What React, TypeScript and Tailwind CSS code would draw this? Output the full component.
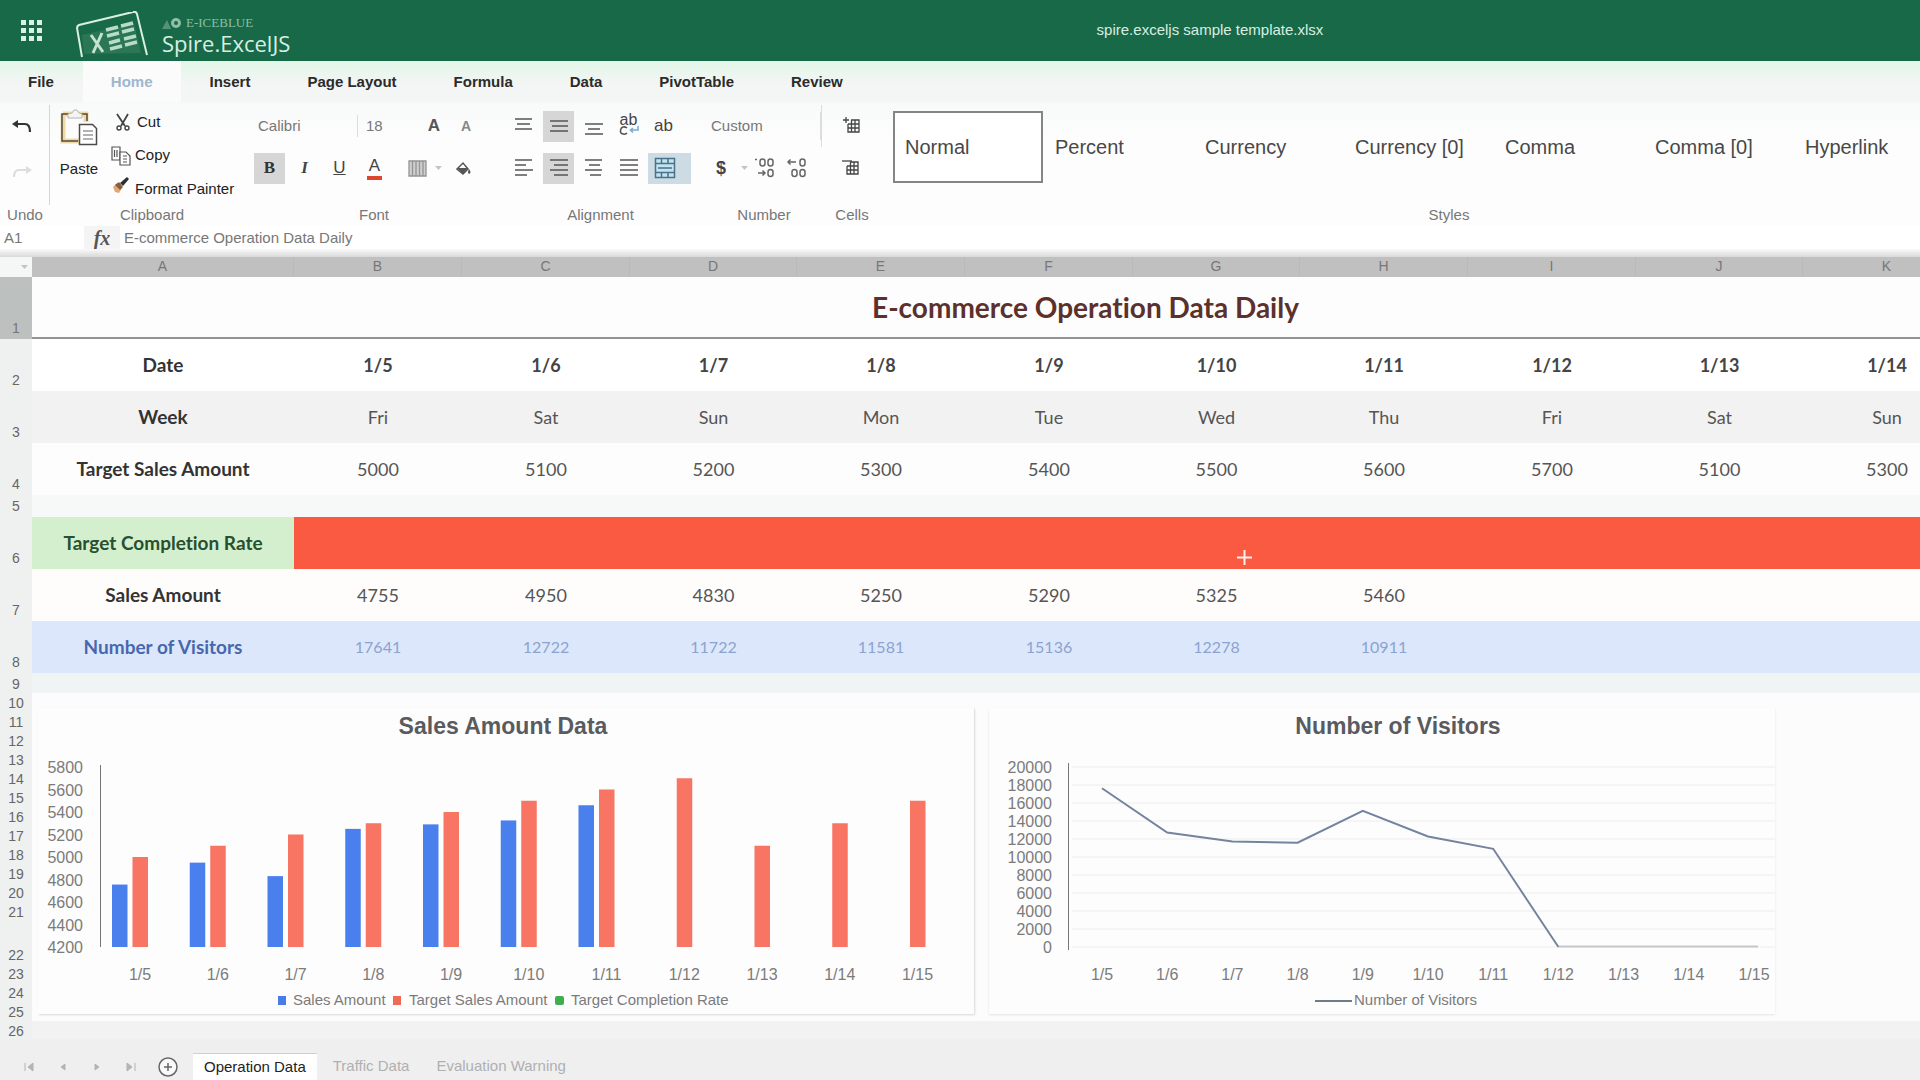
import React from "react";

const dates = ["1/5", "1/6", "1/7", "1/8", "1/9", "1/10", "1/11", "1/12", "1/13", "1/14", "1/15"];
const weeks = ["Fri", "Sat", "Sun", "Mon", "Tue", "Wed", "Thu", "Fri", "Sat", "Sun"];
const targets = [5000, 5100, 5200, 5300, 5400, 5500, 5600, 5700, 5100, 5300, 5500];
const sales = [4755, 4950, 4830, 5250, 5290, 5325, 5460];
const visitors = [17641, 12722, 11722, 11581, 15136, 12278, 10911];
const columns = ["A", "B", "C", "D", "E", "F", "G", "H", "I", "J", "K", ""];
const dataColumns = columns.slice(1);

/* ---------- icons ---------- */

function Lines({ rows }: { rows: [number, number, number][] }) {
  return (
    <svg width="20" height="20" viewBox="0 0 20 20" stroke="#555" strokeWidth="1.5" aria-hidden="true">
      {rows.map(([x1, x2, y]) => (
        <line key={y} x1={x1} x2={x2} y1={y} y2={y} />
      ))}
    </svg>
  );
}

function Caret() {
  return (
    <svg width="7" height="4" viewBox="0 0 7 4" fill="#c4c4c4" aria-hidden="true">
      <path d="M0 0h7L3.500 4z" />
    </svg>
  );
}

function PasteIcon() {
  return (
    <svg width="38" height="38" viewBox="0 0 38 38" fill="none" aria-hidden="true">
      <path d="M3 5h23v8M3 5v27h16" stroke="#f1d9a4" strokeWidth="5" />
      <path d="M9 5H2v27h16M20 5h7v7" stroke="#4d4a45" strokeWidth="1.500" />
      <path d="M8 9V5l4-1 2-3h3l2 3 3 1v4z" fill="#f4f4f4" stroke="#b5b5b5" />
      <path d="M19.500 15.500h13l4 4v16h-17z" fill="#fff" stroke="#4f4b49" strokeWidth="1.500" />
      <path d="M23 22h10M23 26h10M23 30h10" stroke="#666" strokeWidth="1.200" />
    </svg>
  );
}

function CutIcon() {
  return (
    <svg width="16" height="18" viewBox="0 0 16 18" fill="none" stroke="#444" strokeWidth="1.400" aria-hidden="true">
      <path d="M2 1l8 12M13 1L6 13" strokeWidth="1.800" />
      <circle cx="4" cy="15" r="2" />
      <circle cx="12" cy="15" r="2" />
    </svg>
  );
}

function CopyIcon() {
  return (
    <svg width="20" height="20" viewBox="0 0 20 20" fill="#fff" stroke="#555" strokeWidth="1.200" aria-hidden="true">
      <path d="M1 1h8v13H1z" />
      <path d="M3.500 4v7M6 4v7" />
      <path d="M9 6h6l4 4v9H9z" />
      <path d="M12 10h4M12 13h4M12 16h4" />
    </svg>
  );
}

function BrushIcon() {
  return (
    <svg width="18" height="18" viewBox="0 0 18 18" aria-hidden="true">
      <path d="M1 10l4-4 5 5-3 5-4-1z" fill="#e2a873" />
      <path d="M3 8l4-3 4 5-3 3z" fill="#8a5a45" />
      <path d="M8 6l7-6 2 2-6 7z" fill="#2f2f2f" />
    </svg>
  );
}

function CellsIcon({ remove = false }: { remove?: boolean }) {
  return (
    <svg width="20" height="18" viewBox="0 0 20 18" fill="none" stroke="#444" strokeWidth="1.300" aria-hidden="true">
      {remove ? <path d="M0 2h10" /> : <path d="M0 3h6M3 0v6" />}
      <path d="M8 3h8v12H5V7M5 7h11M5 11h11M8.500 3v12M12 3v12" />
    </svg>
  );
}

function Logo() {
  return (
    <svg width="74" height="48" viewBox="0 0 74 48" fill="none" aria-hidden="true">
      <path d="M6 46L1 17Q1 15 3 14L57 1Q60 0 61 3L71 44" stroke="#d9efe2" strokeWidth="2" />
      <path d="M8 43L6 24l52-12 7 30z" fill="#3d8463" opacity="0.500" />
      <path d="M15 24l12 17M26 22L17 42" stroke="#c5e2d2" strokeWidth="3" />
      <g stroke="#b9dcc9" strokeWidth="3.500">
        <path d="M30 19l12-3M45 15l12-3" />
        <path d="M31 25l12-3M46 21l12-3" />
        <path d="M33 32l11-3M48 28l12-3" />
        <path d="M34 38l12-3M49 34l12-3" />
      </g>
    </svg>
  );
}

/* ---------- ribbon pieces ---------- */

function Tool({ label, active = false, children }: { label: string; active?: boolean; children: React.ReactNode }) {
  return (
    <button
      type="button"
      aria-label={label}
      className={
        active
          ? "flex h-[31px] w-[31px] items-center justify-center bg-[#d6d6d6] text-[#333]"
          : "flex h-[31px] w-[31px] items-center justify-center text-[#444]"
      }
    >
      {children}
    </button>
  );
}

function Group({ label, className, children }: { label: string; className: string; children: React.ReactNode }) {
  return (
    <section aria-label={label} className={`flex shrink-0 flex-col ${className}`}>
      <div className="h-[100px]">{children}</div>
      <div className="text-center leading-5 text-[#777]">{label}</div>
    </section>
  );
}

const menuTabs = ["File", "Home", "Insert", "Page Layout", "Formula", "Data", "PivotTable", "Review"];
const styleNames = ["Normal", "Percent", "Currency", "Currency [0]", "Comma", "Comma [0]", "Hyperlink"];

function Ribbon() {
  return (
    <div className="flex overflow-hidden bg-linear-to-b from-[#f8f9f9] to-[#fdfdfd] to-30% pt-[3px] pb-px text-[15px]">
      <Group label="Undo" className="w-[50px]">
        <div className="flex h-full flex-col items-start border-r border-[#d5d5d5] pl-3">
          <button type="button" aria-label="Undo" className="flex h-[42px] items-center">
            <svg width="20" height="16" viewBox="0 0 20 16" fill="none" stroke="#333" strokeWidth="2.200">
              <path d="M2 6h11q5 0 5 8" />
              <path d="M0 6l6-4v8z" fill="#333" stroke="none" />
            </svg>
          </button>
          <button type="button" aria-label="Redo" className="flex h-[50px] items-center">
            <svg width="20" height="14" viewBox="0 0 20 14" fill="none" stroke="#ddd" strokeWidth="2.200">
              <path d="M18 5H7Q2 5 2 12" />
              <path d="M20 5l-6-4v8z" fill="#ddd" stroke="none" />
            </svg>
          </button>
        </div>
      </Group>

      <Group label="Clipboard" className="w-[204px]">
        <div className="flex h-full text-[#222]">
          <button type="button" className="flex w-[58px] flex-col items-center gap-2.5 pt-1">
            <PasteIcon />
            <span className="leading-6">Paste</span>
          </button>
          <div className="flex flex-col pt-px pl-0.5">
            <button type="button" className="flex h-8 items-center gap-1.5 pl-1">
              <span className="flex w-[17px] justify-center"><CutIcon /></span>Cut
            </button>
            <button type="button" className="flex h-9 items-center gap-1">
              <span className="flex w-[21px] justify-center"><CopyIcon /></span>Copy
            </button>
            <button type="button" className="flex h-8 items-center gap-1 whitespace-nowrap">
              <span className="flex h-full w-[21px] justify-center pt-1"><BrushIcon /></span>Format Painter
            </button>
          </div>
        </div>
      </Group>

      <Group label="Font" className="w-[240px]">
        <div className="flex h-[42px] items-center text-[#777]">
          <select aria-label="Font name" className="h-[22px] w-[104px] appearance-none border-r border-[#ddd] pl-1">
            <option>Calibri</option>
          </select>
          <select aria-label="Font size" className="ml-1 h-[22px] w-[60px] appearance-none pl-1">
            <option>18</option>
          </select>
          <button type="button" aria-label="Increase font size" className="w-6 text-[17px] font-bold text-[#555]">A</button>
          <button type="button" aria-label="Decrease font size" className="ml-2 w-6 text-[14px] font-bold text-[#888]">A</button>
        </div>
        <div className="flex h-[42px] items-center gap-1 text-[17px]">
          <Tool label="Bold" active><b className="font-['Liberation_Serif']">B</b></Tool>
          <Tool label="Italic"><i className="font-['Liberation_Serif'] font-bold">I</i></Tool>
          <Tool label="Underline"><span className="underline">U</span></Tool>
          <Tool label="Font color">
            <span className="border-b-4 border-[#e0452f] px-0.5 leading-5">A</span>
          </Tool>
          <div className="ml-3.5 flex items-center gap-2">
            <button type="button" aria-label="Borders" className="flex items-center gap-2">
              <svg width="19" height="17" viewBox="0 0 19 17" fill="#cfcfcf" stroke="#949494" strokeWidth="1.300">
                <path d="M1 1h17v15H1zM4.500 1v15M8 1v15M11.500 1v15M15 1v15" />
              </svg>
              <Caret />
            </button>
            <button type="button" aria-label="Fill color" className="ml-1.5">
              <svg width="15" height="15" viewBox="0 0 15 15" fill="#555">
                <path d="M1 8l6-6 5 6-5 5z" fill="#fff" stroke="#555" strokeWidth="1.500" />
                <path d="M1 7h11l-5 6zM13 8q3 4 0 5-2-1 0-5z" />
              </svg>
            </button>
          </div>
        </div>
      </Group>

      <Group label="Alignment" className="w-[213px]">
        <div className="mr-2 flex h-[42px] items-center gap-1 pl-[14px] text-[#444]">
          <Tool label="Top align"><Lines rows={[[1, 18, 3], [3, 16, 8], [1, 18, 13]]} /></Tool>
          <Tool label="Middle align" active><Lines rows={[[1, 19, 5], [3, 19, 10], [1, 19, 15]]} /></Tool>
          <Tool label="Bottom align"><Lines rows={[[1, 19, 8], [4, 16, 13], [1, 19, 18]]} /></Tool>
          <Tool label="Wrap text">
            <span className="flex flex-col pb-1 text-[16px] leading-[12px]">
              <span>ab</span>
              <svg width="20" height="9" viewBox="0 0 20 9" fill="none" stroke="#555" strokeWidth="1.500" aria-hidden="true">
                <path d="M8 2Q6 .5 4 1T1.500 4.500 4 8t4-1" />
                <path d="M19 0v4h-7M14 2l-2.500 2L14 6.500" stroke="#7ba6d6" />
              </svg>
            </span>
          </Tool>
          <Tool label="Orientation"><span className="text-[17px]">ab</span></Tool>
        </div>
        <div className="flex h-[42px] items-center gap-1 pl-[14px]">
          <Tool label="Align left"><Lines rows={[[1, 18, 2], [1, 12, 7], [1, 19, 12], [1, 13, 17]]} /></Tool>
          <Tool label="Align center" active><Lines rows={[[1, 19, 2], [5, 19, 7], [1, 19, 12], [5, 19, 17]]} /></Tool>
          <Tool label="Align right"><Lines rows={[[1, 18, 2], [5, 16, 7], [1, 18, 12], [6, 17, 17]]} /></Tool>
          <Tool label="Justify"><Lines rows={[[1, 19, 2], [1, 19, 7], [1, 19, 12], [1, 19, 17]]} /></Tool>
          <button type="button" aria-label="Merge cells" className="flex h-[31px] w-[43px] items-center bg-[#cddbe4] pl-1.5">
            <svg width="22" height="22" viewBox="0 0 22 22" fill="#c3e3f1" stroke="#4b7288" strokeWidth="1.500">
              <path d="M1.500 1.500h19v19h-19z" />
              <path d="M1 6.500h20M1 15.500h20M7.500 1v5M14 1v5M7.500 16v5M14 16v5M4 11h14" />
            </svg>
          </button>
        </div>
      </Group>

      <Group label="Number" className="w-[114px]">
        <div className="flex h-[42px] items-center">
          <select aria-label="Number format" className="h-7 w-full appearance-none border-r border-[#ddd] pl-1 text-[#777]">
            <option>Custom</option>
          </select>
        </div>
        <div className="flex h-[42px] items-center text-[#444]">
          <button type="button" aria-label="Currency format" className="flex w-[41px] items-center justify-between pl-[9px] text-[18px] font-bold">
            $<Caret />
          </button>
          <button type="button" aria-label="Increase decimal" className="ml-1.5">
            <svg width="20" height="20" viewBox="0 0 20 20" fill="none" stroke="#666" strokeWidth="1.500">
              <rect x="6" y="1" width="5" height="7" rx="2.500" />
              <rect x="14" y="1" width="5" height="7" rx="2.500" />
              <rect x="14" y="11.500" width="5" height="7" rx="2.500" />
              <path d="M1 1.500h2M4 15h7M8.500 12.500L11 15l-2.500 2.500" />
            </svg>
          </button>
          <button type="button" aria-label="Decrease decimal" className="ml-3">
            <svg width="20" height="20" viewBox="0 0 20 20" fill="none" stroke="#666" strokeWidth="1.500">
              <rect x="14" y="1" width="5" height="7" rx="2.500" />
              <rect x="6" y="11.500" width="5" height="7" rx="2.500" />
              <rect x="14" y="11.500" width="5" height="7" rx="2.500" />
              <path d="M2 4h8M4.500 1.500L2 4l2.500 2.500" />
            </svg>
          </button>
        </div>
      </Group>

      <Group label="Cells" className="w-[62px]">
        <div className="border-l border-[#ddd]">
          <button type="button" aria-label="Insert cells" className="flex h-[42px] w-full items-center justify-center">
            <CellsIcon />
          </button>
        </div>
        <button type="button" aria-label="Delete cells" className="flex h-[42px] w-full items-center justify-center">
          <CellsIcon remove />
        </button>
      </Group>

      <Group label="Styles" className="w-[1132px]">
        <div className="flex pt-1.5 pl-[10px] text-[20px] text-[#484848]">
          {styleNames.map((name, i) => (
            <button
              key={name}
              type="button"
              className={
                i === 0
                  ? "h-[72px] w-[150px] shrink-0 border-2 border-[#858585] bg-white pl-2.5 text-left"
                  : "h-[72px] w-[150px] shrink-0 border-2 border-transparent pl-2.5 text-left"
              }
            >
              {name}
            </button>
          ))}
        </div>
      </Group>
    </div>
  );
}

/* ---------- charts ---------- */

const FONT = "'Liberation Sans', Arial, sans-serif";

function SalesChart() {
  const y = (v: number) => 947 - (v - 4200) * 0.1125;
  const step = 77.75;
  return (
    <svg className="h-full w-full" viewBox="38 708 936 306" fontFamily={FONT} role="img" aria-label="Sales Amount Data">
      <text x="503" y="734" fontSize="23" fontWeight="bold" fill="#595b60" textAnchor="middle">Sales Amount Data</text>
      {[5800, 5600, 5400, 5200, 5000, 4800, 4600, 4400, 4200].map((v) => (
        <text key={v} x="83" y={y(v) + 6} fontSize="16" fill="#7b7b7b" textAnchor="end">{v}</text>
      ))}
      <line x1="100.500" x2="100.500" y1="765" y2="947" stroke="#777" />
      {targets.map((t, i) => (
        <g key={i}>
          {sales[i] && <rect x={112 + i * step} y={y(sales[i])} width="15.500" height={947 - y(sales[i])} fill="#4a80ee" />}
          <rect x={132.5 + i * step} y={y(t)} width="15.500" height={947 - y(t)} fill="#f87463" />
          <text x={140 + i * step} y="980" fontSize="16" fill="#7b7b7b" textAnchor="middle">{dates[i]}</text>
        </g>
      ))}
      <g fontSize="15" fill="#7b7b7b">
        <rect x="278" y="996" width="8" height="9" fill="#4a7be8" />
        <text x="293" y="1005">Sales Amount</text>
        <rect x="393" y="996" width="8" height="9" fill="#f06a58" />
        <text x="409" y="1005">Target Sales Amount</text>
        <rect x="555" y="996" width="9" height="9" rx="2" fill="#3fae4e" />
        <text x="571" y="1005">Target Completion Rate</text>
      </g>
    </svg>
  );
}

function VisitorsChart() {
  const y = (v: number) => 947 - v * 0.009;
  const x = (i: number) => 1102 + i * 65.2;
  const ticks = [20000, 18000, 16000, 14000, 12000, 10000, 8000, 6000, 4000, 2000, 0];
  const line = [...visitors.map((v, i) => `${x(i)},${y(v)}`), `${x(7)},947`].join(" ");
  return (
    <svg className="h-full w-full" viewBox="989 708 786 306" fontFamily={FONT} role="img" aria-label="Number of Visitors">
      <text x="1398" y="734" fontSize="23" fontWeight="bold" fill="#595b60" textAnchor="middle">Number of Visitors</text>
      {ticks.map((v) => (
        <g key={v}>
          <line x1="1072" x2="1775" y1={y(v)} y2={y(v)} stroke="#f5f5f6" strokeWidth="2" />
          <text x="1052" y={y(v) + 6} fontSize="16" fill="#7b7b7b" textAnchor="end">{v}</text>
        </g>
      ))}
      <line x1="1068.500" x2="1068.500" y1="763" y2="950" stroke="#777" />
      <polyline points={`${x(7)},946.5 ${x(10) + 4},946.5`} fill="none" stroke="#c6c8cb" strokeWidth="2" />
      <polyline points={line} fill="none" stroke="#75839f" strokeWidth="2" />
      {dates.map((d, i) => (
        <text key={d} x={x(i)} y="980" fontSize="16" fill="#7b7b7b" textAnchor="middle">{d}</text>
      ))}
      <line x1="1315" x2="1352" y1="1001" y2="1001" stroke="#6d7c8c" strokeWidth="2" />
      <text x="1354" y="1005" fontSize="15" fill="#7b7b7b">Number of Visitors</text>
    </svg>
  );
}

/* ---------- worksheet ---------- */

type RowSpec = { label: string; values: (string | number)[]; height: string; row: string; head: string; cell: string };

const rows: RowSpec[] = [
  { label: "Date", values: dates.slice(0, 10), height: "h-[52px]", row: "bg-white", head: "text-[#333]", cell: "font-bold text-[#444] text-[18px]" },
  { label: "Week", values: weeks, height: "h-[52px]", row: "bg-[#f2f2f2]", head: "text-[#333]", cell: "text-[#555] text-[18px]" },
  { label: "Target Sales Amount", values: targets.slice(0, 10), height: "h-[52px]", row: "bg-[#fdfdfd]", head: "text-[#333]", cell: "text-[#555] text-[18px]" },
  { label: "", values: [], height: "h-[22px]", row: "bg-[#f7f8f8]", head: "", cell: "" },
  { label: "Target Completion Rate", values: [], height: "h-[52px]", row: "bg-[#fb5a42]", head: "bg-[#d4efce] text-[#28502f]", cell: "" },
  { label: "Sales Amount", values: sales, height: "h-[52px]", row: "bg-[#fefdfc]", head: "text-[#333]", cell: "text-[#555] text-[18px]" },
  { label: "Number of Visitors", values: visitors, height: "h-[52px]", row: "bg-[#dde7fb]", head: "text-[#4668ae]", cell: "text-[#8ba3cf] text-[16px]" },
];

const emptyRows = Array.from({ length: 18 }, (_, i) => i + 9);

const rowHead = "bg-[#eff1f1] px-0 pt-0 text-center align-bottom font-['Liberation_Sans'] text-[14px] leading-[18px] font-normal text-[#666]";

function Sheet() {
  return (
    <main className="relative min-h-0 flex-1 overflow-hidden bg-[#fcfcfc]">
      <table className="w-[2139px] table-fixed border-separate border-spacing-0 font-['Lato',sans-serif] [font-variant-ligatures:none]">
        <colgroup>
          <col className="w-8" />
          <col className="w-[262px]" />
          {dataColumns.map((c, i) => (
            <col key={i} className={i % 3 === 2 ? "w-[167px]" : "w-[168px]"} />
          ))}
        </colgroup>
        <thead>
          <tr className="h-5 bg-[#c0c0c0] font-['Liberation_Sans'] text-[14px] leading-[18px] text-[#777]">
            <th className="bg-[#f5f7f7] p-0" aria-label="Select all">
              <div className="flex justify-end pr-1"><Caret /></div>
            </th>
            {columns.map((c, i) => (
              <th key={i} scope="col" className="border-r border-[#b9b9b9] p-0 align-top font-normal">{c}</th>
            ))}
          </tr>
        </thead>
        <tbody>
          <tr className="h-[62px]">
            <th scope="row" className="bg-[#bcc0be] px-0 pt-0 pb-0.5 text-center align-bottom font-['Liberation_Sans'] text-[14px] leading-[18px] font-normal text-[#777]">1</th>
            <td colSpan={12} className="border-b-2 border-[#939393] bg-[#fdfdfd] p-0 text-center text-[28px] leading-8 font-bold text-[#5c312c]">
              E-commerce Operation Data Daily
            </td>
          </tr>
          {rows.map((r, i) => (
            <tr key={i} className={`${r.height} ${r.row}`}>
              <th scope="row" className={`${rowHead} pb-0.5`}>{i + 2}</th>
              <th className={`p-0 text-center text-[19px] leading-6 font-bold ${r.head}`}>{r.label}</th>
              {dataColumns.map((c, j) => (
                <td key={j} className={`p-0 text-center ${r.cell}`}>{r.values[j]}</td>
              ))}
            </tr>
          ))}
          {emptyRows.map((n) => (
            <tr key={n} className={n === 22 ? "h-[43px]" : n === 9 ? "h-5 bg-[#f1f4f5]" : n === 26 ? "h-[19px] bg-[#f2f2f2]" : "h-[19px]"}>
              <th scope="row" className={`${rowHead} pb-0`}>{n}</th>
              <td colSpan={12} className="p-0" />
            </tr>
          ))}
        </tbody>
      </table>

      <div className="absolute top-[451px] left-[38px] h-[306px] w-[936px] bg-[#fdfdfd] shadow-[1px_1px_2px_#d8d8d8]">
        <SalesChart />
      </div>
      <div className="absolute top-[451px] left-[989px] h-[306px] w-[786px] bg-[#fdfdfd] shadow-[0_1px_2px_#e4e4e4]">
        <VisitorsChart />
      </div>
      <svg className="absolute top-[293px] left-[1237px]" width="15" height="15" viewBox="0 0 15 15" stroke="#fff0ec" strokeWidth="2" aria-hidden="true">
        <path d="M7.500 0v15M0 7.500h15" />
      </svg>
    </main>
  );
}

function SheetTabs() {
  const nav = [
    { label: "First sheet", d: "M1 1v8M9 1L4 5l5 4z" },
    { label: "Previous sheet", d: "M7 2L3 5l4 3z" },
    { label: "Next sheet", d: "M3 2l4 3-4 3z" },
    { label: "Last sheet", d: "M1 1l5 4-5 4zM9 1v8" },
  ];
  return (
    <footer className="bg-[#efefef] pt-[14px] text-[15px]">
      <div className="flex h-[27px] items-center">
        <div className="flex items-center gap-6 pl-6">
          {nav.map((n) => (
            <button key={n.label} type="button" aria-label={n.label}>
              <svg width="10" height="10" viewBox="0 0 10 10" fill="#b4b4b4" stroke="#b4b4b4"><path d={n.d} /></svg>
            </button>
          ))}
          <button type="button" aria-label="Add sheet" className="-ml-0.5">
            <svg width="20" height="20" viewBox="0 0 20 20" fill="#fafafa" stroke="#666" strokeWidth="1.500">
              <circle cx="10" cy="10" r="9" />
              <path d="M10 6v8M6 10h8" />
            </svg>
          </button>
        </div>
        <button type="button" className="ml-[15px] h-full border-t border-[#cfcfcf] bg-white px-[11px] text-[#222]">Operation Data</button>
        <button type="button" className="ml-4 text-[#b0b0b0]">Traffic Data</button>
        <button type="button" className="ml-[27px] text-[#b0b0b0]">Evaluation Warning</button>
      </div>
    </footer>
  );
}

export default function App() {
  return (
    <div className="flex h-screen flex-col overflow-hidden bg-white font-['Liberation_Sans',Arial,sans-serif]">
      <header className="flex h-[61px] shrink-0 items-center bg-[#186947] text-[#d8eee2]">
        <button type="button" aria-label="Apps" className="ml-[21px]">
          <svg width="21" height="21" viewBox="0 0 21 21" fill="#dcf1e6">
            {[0, 8, 16].map((y) => [0, 8, 16].map((x) => <rect key={`${x}-${y}`} x={x} y={y} width="5" height="5" />))}
          </svg>
        </button>
        <div className="ml-[34px] flex items-center gap-3 pt-2">
          <Logo />
          <div className="w-[142px]">
            <div className="flex items-center gap-1 font-['Liberation_Serif'] text-[13px] leading-4 text-[#8fbfa6]">
              <svg width="20" height="12" viewBox="0 0 20 12" fill="#8fbfa6" aria-hidden="true">
                <path d="M0 12l5-9 4 9z" opacity="0.500" />
                <circle cx="14" cy="6" r="5" />
                <circle cx="14" cy="6" r="2" fill="#186947" />
              </svg>
              E-ICEBLUE
            </div>
            <div className="font-['Open_Sans'] text-[22px] leading-6">Spire.ExcelJS</div>
          </div>
        </div>
        <h1 className="flex-1 pl-[196px] text-center text-[15px]">spire.exceljs sample template.xlsx</h1>
      </header>

      <nav className="flex h-[41px] shrink-0 items-center gap-px bg-linear-to-b from-[#e2f7e8] to-[#f4f5f5] to-60% text-[15px] font-bold text-[#2b2b2b]">
        {menuTabs.map((t) => (
          <button
            key={t}
            type="button"
            className={t === "Home" ? "h-full bg-[#fbfbfc] px-7 pt-0.5 text-[#9fb6cc]" : "h-full px-7 pt-0.5"}
          >
            {t}
          </button>
        ))}
      </nav>

      <Ribbon />

      <div className="flex h-[23px] items-center text-[15px] text-[#777]">
        <input aria-label="Name box" defaultValue="A1" className="h-full w-[84px] pl-1" />
        <span className="flex h-full w-9 items-center justify-center bg-[#f4f4f4] font-['Liberation_Serif'] text-[20px] font-bold text-[#555] italic">fx</span>
        <input aria-label="Formula" defaultValue="E-commerce Operation Data Daily" className="h-full flex-1 pl-1" />
      </div>
      <div className="h-2 shrink-0 bg-linear-to-b from-[#fafafa] to-[#d9d9d9]" />

      <Sheet />
      <SheetTabs />
    </div>
  );
}
